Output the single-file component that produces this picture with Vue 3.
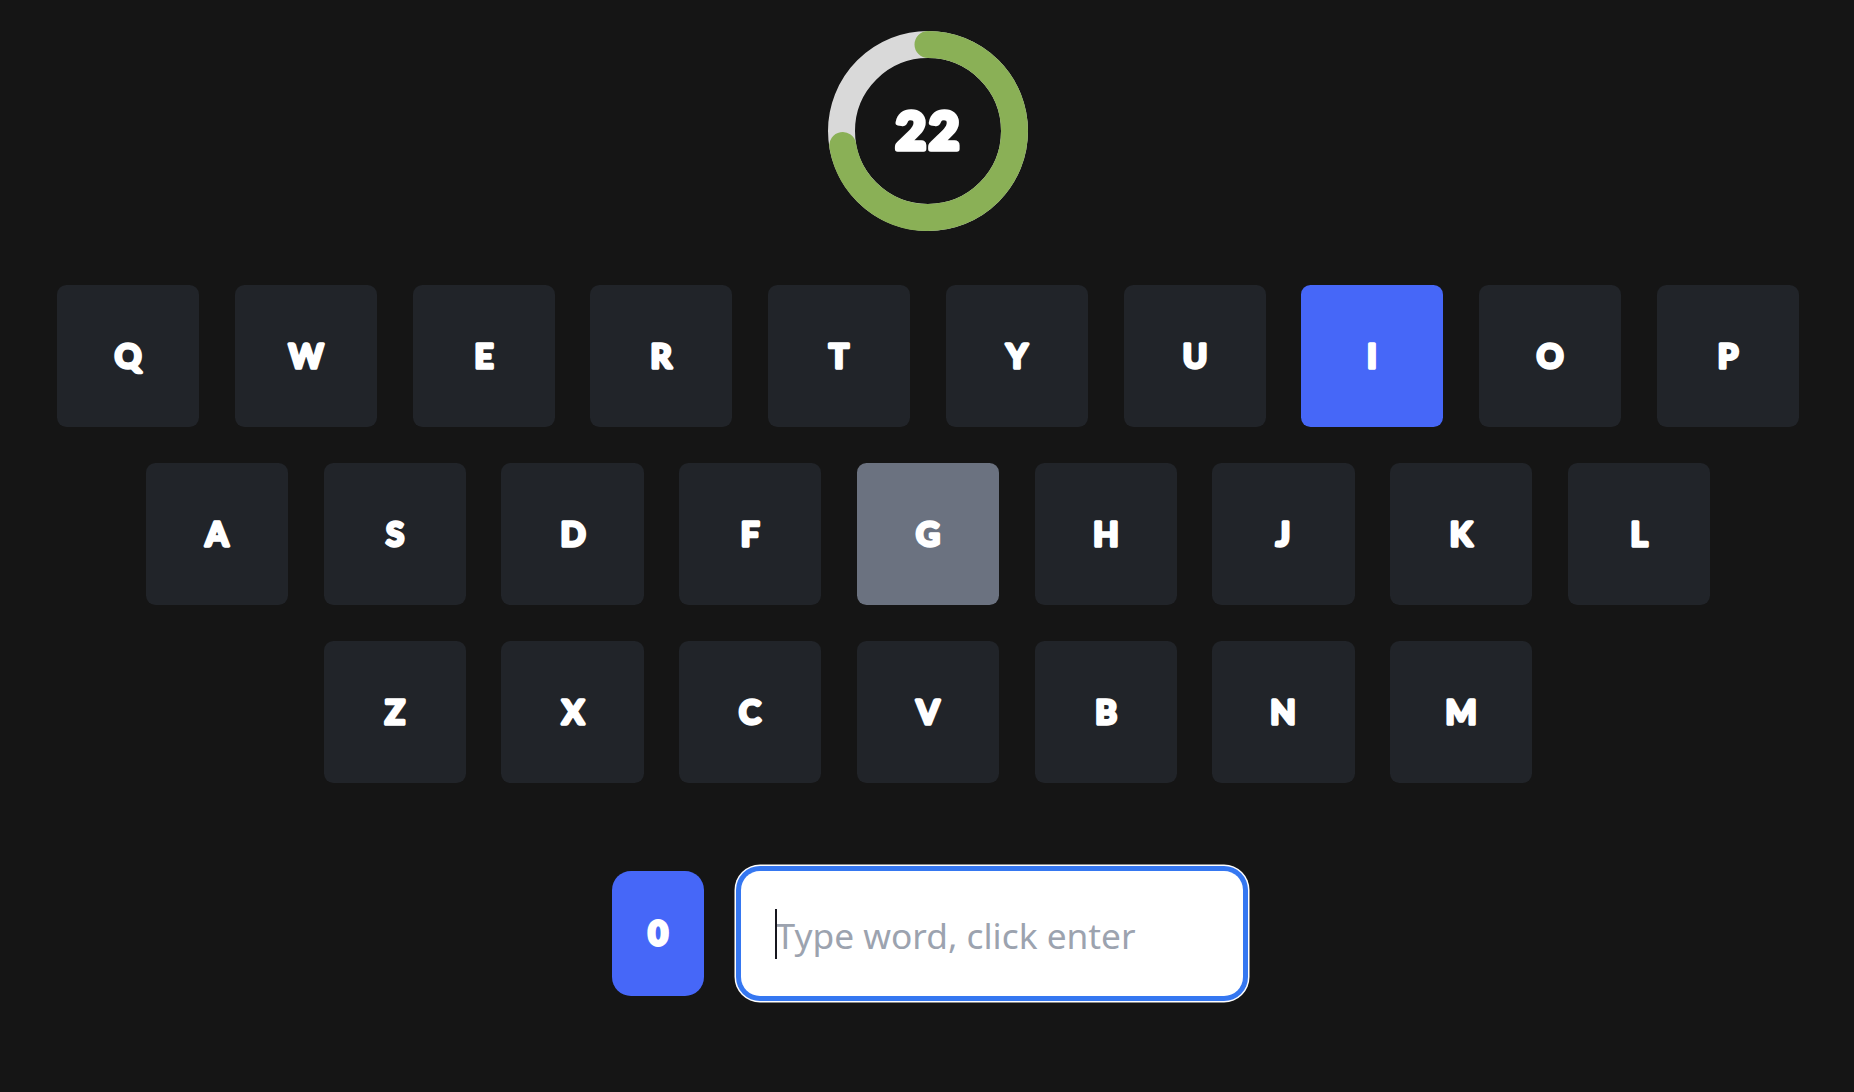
<script setup>
const rows = [
  ['Q', 'W', 'E', 'R', 'T', 'Y', 'U', 'I', 'O', 'P'],
  ['A', 'S', 'D', 'F', 'G', 'H', 'J', 'K', 'L'],
  ['Z', 'X', 'C', 'V', 'B', 'N', 'M'],
]

const active = 'I'
const missed = 'G'

const time = 22
const progress = 0.722
const radius = 86.5
const circumference = 2 * Math.PI * radius
const dash = `${circumference * progress} ${circumference}`
</script>

<template>
  <main class="page">
    <div class="timer">
      <svg class="timer__ring" viewBox="0 0 200 200">
        <circle class="timer__track" cx="100" cy="100" :r="radius" />
        <circle class="timer__progress" cx="100" cy="100" :r="radius" :stroke-dasharray="dash" />
      </svg>
      <svg class="timer__value" viewBox="0 0 200 200">
        <text class="label label--large" x="101" y="118">{{ time }}</text>
      </svg>
    </div>

    <div class="keyboard">
      <div v-for="(row, index) in rows" :key="index" class="keyboard__row">
        <div
          v-for="letter in row"
          :key="letter"
          :class="[
            'key',
            letter === active ? 'key--active' : null,
            letter === missed ? 'key--missed' : null,
          ]"
        >
          <svg class="key__label" viewBox="0 0 60 60">
            <text class="label" x="30" y="42">{{ letter }}</text>
          </svg>
        </div>
      </div>
    </div>

    <div class="entry">
      <div class="entry__score">
        <svg class="key__label" viewBox="0 0 60 60">
          <text class="label label--score" x="30" y="42">0</text>
        </svg>
      </div>
      <div class="entry__field">
        <input class="entry__input" type="text" placeholder="Type word, click enter" />
        <span class="entry__caret"></span>
      </div>
    </div>
  </main>
</template>

<style>
html,
body {
  margin: 0;
  background: #151515;
}
</style>

<style scoped>
.page {
  box-sizing: border-box;
  height: 1092px;
  padding-top: 31px;
  padding-left: 2px;
  display: flex;
  flex-direction: column;
  align-items: center;
  background: #151515;
}

.timer {
  position: relative;
  width: 200px;
  height: 200px;
}

.timer__ring {
  display: block;
  width: 200px;
  height: 200px;
  transform: rotate(-90deg);
}

.timer__track,
.timer__progress {
  fill: none;
  stroke-width: 27;
}

.timer__track {
  stroke: #d9d9d9;
}

.timer__progress {
  stroke: #8ab056;
  stroke-linecap: round;
}

.timer__value {
  position: absolute;
  inset: 0;
}

.label {
  fill: #fff;
  stroke: #fff;
  stroke-width: 3.4px;
  stroke-linejoin: round;
  text-anchor: middle;
  font-family: Lato, "Liberation Sans", sans-serif;
  font-size: 33px;
  font-weight: 700;
}

.label--large {
  stroke-width: 5.6px;
  font-size: 52px;
  letter-spacing: 3px;
}

.label--score {
  stroke-width: 4px;
}

.keyboard {
  margin-top: 54px;
  display: flex;
  flex-direction: column;
  gap: 35.8px;
}

.keyboard__row {
  display: flex;
  justify-content: center;
  gap: 35.55px;
}

.key {
  width: 142.2px;
  height: 142.2px;
  display: flex;
  align-items: center;
  justify-content: center;
  border-radius: 9.5px;
  background: #212429;
}

.key__label {
  width: 60px;
  height: 60px;
}

.key--active {
  background: #4667f8;
}

.key--missed {
  background: #6b7280;
}

.entry {
  margin-top: 87.8px;
  margin-left: -1px;
  display: flex;
  align-items: center;
  gap: 37px;
}

.entry__score {
  width: 92px;
  height: 125px;
  display: flex;
  align-items: center;
  justify-content: center;
  border-radius: 19px;
  background: #4667f8;
}

.entry__field {
  position: relative;
  width: 502px;
  height: 125px;
}

.entry__input {
  box-sizing: border-box;
  width: 100%;
  height: 100%;
  padding: 3px 34.5px 0;
  border: 0;
  border-radius: 19px;
  outline: none;
  background: #fff;
  box-shadow: 0 0 0 5px #3577f1, 0 0 0 6.5px #fff;
  color: #111827;
  font-family: "Noto Sans", "Open Sans", sans-serif;
  font-size: 35.3px;
}

.entry__input::placeholder {
  color: #9ca3af;
  opacity: 1;
}

.entry__caret {
  position: absolute;
  left: 34px;
  top: 38px;
  width: 2px;
  height: 50px;
  background: #16161e;
}
</style>
